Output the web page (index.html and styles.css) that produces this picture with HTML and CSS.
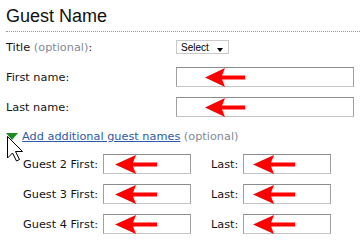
FILE: index.html
```html
<!DOCTYPE html>
<html>
<head>
<meta charset="utf-8">
<link rel="stylesheet" href="styles.css">
</head>
<body>
<h1 class="heading">Guest Name</h1>
<div class="row row-title">
  <span class="label">Title <span class="opt">(optional)</span>:</span>
  <div class="select"><span class="select-text">Select</span><span class="caret"></span></div>
</div>
<div class="row">
  <span class="label">First name:</span>
  <span class="field field-wide">
    <input class="text" type="text">
    <svg class="arrow arrow-main" width="40" height="19" viewBox="0 0 40 19"><polygon points="0,9.5 20,0 17,7.5 40,7.5 40,11.5 17,11.5 20,19" fill="#ff0000"/></svg>
  </span>
</div>
<div class="row">
  <span class="label">Last name:</span>
  <span class="field field-wide">
    <input class="text" type="text">
    <svg class="arrow arrow-main" width="40" height="19" viewBox="0 0 40 19"><polygon points="0,9.5 20,0 17,7.5 40,7.5 40,11.5 17,11.5 20,19" fill="#ff0000"/></svg>
  </span>
</div>
<div class="row row-link">
  <span class="toggle"></span>
  <a class="link" href="#">Add additional guest names</a><span class="opt">&nbsp;(optional)</span>
</div>
<div class="row guest guest-first">
  <span class="glabel">Guest 2 First:</span>
  <span class="field field-small">
    <input class="text" type="text">
    <svg class="arrow arrow-first" width="42" height="19" viewBox="0 0 42 19"><polygon points="0,9.5 21,0 18,7.5 42,7.5 42,11.5 18,11.5 21,19" fill="#ff0000"/></svg>
  </span>
  <span class="llabel">Last:</span>
  <span class="field field-small">
    <input class="text" type="text">
    <svg class="arrow arrow-last" width="42" height="19" viewBox="0 0 42 19"><polygon points="0,9.5 21,0 18,7.5 42,7.5 42,11.5 18,11.5 21,19" fill="#ff0000"/></svg>
  </span>
</div>
<div class="row guest">
  <span class="glabel">Guest 3 First:</span>
  <span class="field field-small">
    <input class="text" type="text">
    <svg class="arrow arrow-first" width="42" height="19" viewBox="0 0 42 19"><polygon points="0,9.5 21,0 18,7.5 42,7.5 42,11.5 18,11.5 21,19" fill="#ff0000"/></svg>
  </span>
  <span class="llabel">Last:</span>
  <span class="field field-small">
    <input class="text" type="text">
    <svg class="arrow arrow-last" width="42" height="19" viewBox="0 0 42 19"><polygon points="0,9.5 21,0 18,7.5 42,7.5 42,11.5 18,11.5 21,19" fill="#ff0000"/></svg>
  </span>
</div>
<div class="row guest">
  <span class="glabel">Guest 4 First:</span>
  <span class="field field-small">
    <input class="text" type="text">
    <svg class="arrow arrow-first" width="42" height="19" viewBox="0 0 42 19"><polygon points="0,9.5 21,0 18,7.5 42,7.5 42,11.5 18,11.5 21,19" fill="#ff0000"/></svg>
  </span>
  <span class="llabel">Last:</span>
  <span class="field field-small">
    <input class="text" type="text">
    <svg class="arrow arrow-last" width="42" height="19" viewBox="0 0 42 19"><polygon points="0,9.5 21,0 18,7.5 42,7.5 42,11.5 18,11.5 21,19" fill="#ff0000"/></svg>
  </span>
</div>
<svg class="cursor" width="18" height="26" viewBox="0 0 18 26"><polygon points="0.5,0.5 0.5,22 5.5,17 9.5,25 12.5,23.5 8.5,15.5 15.5,15.5" fill="#ffffff" stroke="#000000" stroke-width="1"/></svg>
</body>
</html>
```
FILE: styles.css
```css
html, body {
  margin: 0;
  background: #ffffff;
}
body {
  position: relative;
  padding: 0 0 0 6px;
  font-family: "DejaVu Sans", Verdana, sans-serif;
  font-size: 11.3px;
  color: #141414;
  width: 354px;
  height: 240px;
  overflow: hidden;
}
.heading {
  margin: 0;
  padding: 5px 0 4px 0;
  font-family: "Liberation Sans", Arial, sans-serif;
  font-size: 18px;
  font-weight: normal;
  line-height: 22px;
  color: #111111;
  border-bottom: 1px dotted #9a9a9a;
}
.row {
  display: flex;
  align-items: center;
  height: 20px;
  margin-top: 10px;
}
.row-title {
  margin-top: 5px;
}
.label {
  width: 170px;
  flex: none;
}
.opt {
  color: #858a96;
}
.select {
  display: flex;
  align-items: center;
  box-sizing: border-box;
  width: 53px;
  height: 14px;
  border: 1px solid #c8c8c8;
  padding-left: 4px;
  font-family: "Liberation Sans", Arial, sans-serif;
  font-size: 10px;
  color: #000000;
}
.caret {
  margin-left: auto;
  margin-right: 5px;
  margin-top: 5px;
  width: 0;
  height: 0;
  border-top: 4px solid #000000;
  border-left: 3.5px solid transparent;
  border-right: 3.5px solid transparent;
}
.field {
  position: relative;
  display: block;
  flex: none;
  height: 20px;
}
.field-wide {
  width: 178px;
}
.field-small {
  width: 88px;
}
.text {
  display: block;
  box-sizing: border-box;
  width: 100%;
  height: 20px;
  margin: 0;
  padding: 0;
  border: 1px solid #a0a0a0;
  border-top-color: #8c8c8c;
  border-bottom-color: #c4c4c4;
  background: #ffffff;
}
.arrow {
  position: absolute;
  top: 0.5px;
}
.arrow-main {
  left: 28.5px;
}
.arrow-first {
  left: 12px;
}
.arrow-last {
  left: 10px;
}
.row-link {
  margin-top: 9px;
}
.toggle {
  width: 0;
  height: 0;
  border-top: 7px solid #1f8a22;
  border-left: 6.5px solid transparent;
  border-right: 6.5px solid transparent;
  margin-right: 4px;
}
.link {
  color: #2d5ba8;
  text-decoration: underline;
}
.guest {
  padding-left: 17px;
}
.guest-first {
  margin-top: 8px;
}
.glabel {
  width: 80px;
  flex: none;
}
.llabel {
  width: 32px;
  margin-left: 20px;
  flex: none;
}
.cursor {
  position: absolute;
  left: 7px;
  top: 136px;
}
```
